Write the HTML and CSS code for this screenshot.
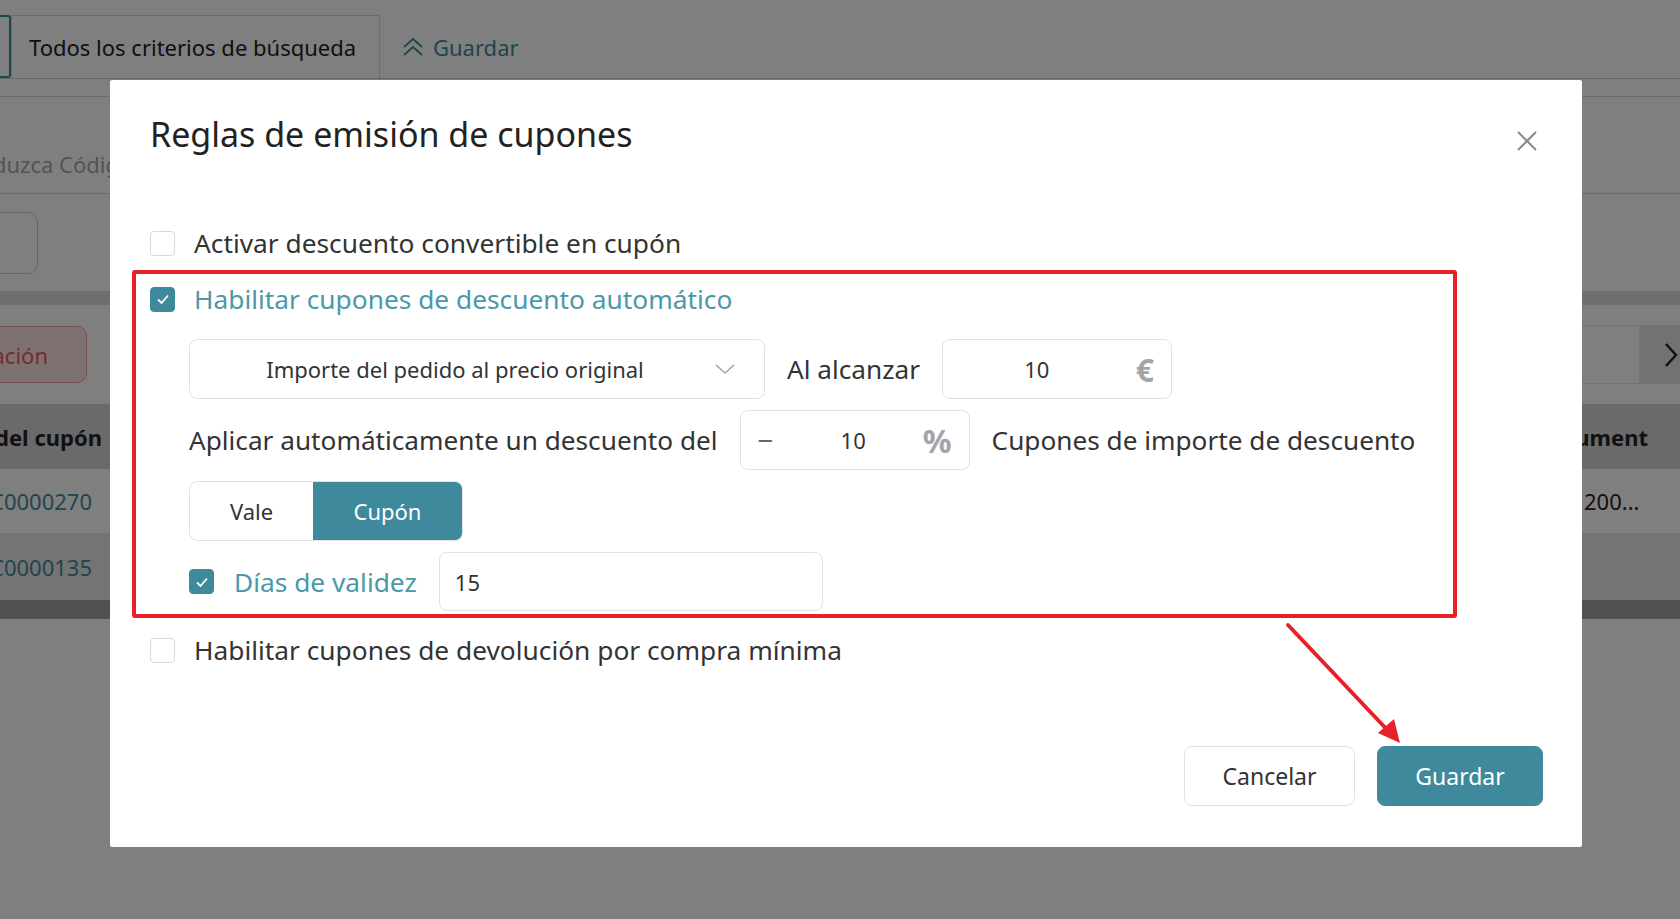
FILE: index.html
```html
<!DOCTYPE html>
<html lang="es">
  <head>
    <meta charset="utf-8">
    <title>Cupones</title>
    <link rel="stylesheet" href="styles.css">
  </head>
  <body>
    <div class="page">
      <div class="tabbar">
        <div class="tab tab-active"></div>
        <div class="tab">Todos los criterios de búsqueda</div>
        <div class="tab-link">
          <svg width="24" height="22" viewBox="0 0 24 22"><path d="M3 11 L12 3 L21 11 M3 19 L12 11 L21 19" fill="none" stroke="#3e8a9c" stroke-width="1.8"/></svg>
          Guardar
        </div>
      </div>
      <div class="filters">
        <div class="field">Introduzca Código del cupón</div>
      </div>
      <div class="btn-row"><div class="ghost-btn"></div></div>
      <div class="band"></div>
      <div class="actions">
        <div class="danger-btn">Eliminación</div>
        <div class="pager">
          <div class="pager-input"></div>
          <div class="pager-next">
            <svg width="14" height="26" viewBox="0 0 14 26"><path d="M2 2 L12 13 L2 24" fill="none" stroke="#222" stroke-width="2.4"/></svg>
          </div>
        </div>
      </div>
      <div class="grid">
        <div class="grid-row grid-head"><span class="cell-left">Código del cupón</span><span class="cell-right">Document</span></div>
        <div class="grid-row"><span class="cell-left code">C0000270</span><span class="cell-right value">200...</span></div>
        <div class="grid-row grid-alt"><span class="cell-left code">C0000135</span><span class="cell-right value"></span></div>
        <div class="scrollbar"></div>
      </div>
    </div>

    <div class="mask">
      <div class="modal">
        <div class="modal-head">
          <h2>Reglas de emisión de cupones</h2>
          <span class="close">
            <svg width="22" height="22" viewBox="0 0 22 22"><path d="M2 2 L20 20 M20 2 L2 20" stroke="#8a8a8a" stroke-width="2"/></svg>
          </span>
        </div>

        <label class="check-row top">
          <span class="box"></span>
          Activar descuento convertible en cupón
        </label>

        <div class="marked">
          <label class="check-row on">
            <span class="box checked"><svg width="16" height="16" viewBox="0 0 16 16"><path d="M3 8.5 L6.5 12 L13 4.5" fill="none" stroke="#fff" stroke-width="1.8"/></svg></span>
            Habilitar cupones de descuento automático
          </label>

          <div class="rule first">
            <div class="select">
              <span class="select-text">Importe del pedido al precio original</span>
              <svg width="22" height="14" viewBox="0 0 22 14"><path d="M2 3 L11 11 L20 3" fill="none" stroke="#a4a4ac" stroke-width="1.6"/></svg>
            </div>
            <span class="text">Al alcanzar</span>
            <div class="num num-euro">
              <span class="num-value">10</span>
              <span class="suffix">€</span>
            </div>
          </div>

          <div class="rule">
            <span class="text">Aplicar automáticamente un descuento del</span>
            <div class="num num-pct">
              <span class="prefix">−</span>
              <span class="num-value">10</span>
              <span class="suffix">%</span>
            </div>
            <span class="text">Cupones de importe de descuento</span>
          </div>

          <div class="rule">
            <div class="segment">
              <span class="seg">Vale</span>
              <span class="seg seg-on">Cupón</span>
            </div>
          </div>

          <div class="rule">
            <label class="check-row on small">
              <span class="box checked"><svg width="16" height="16" viewBox="0 0 16 16"><path d="M3 8.5 L6.5 12 L13 4.5" fill="none" stroke="#fff" stroke-width="1.8"/></svg></span>
              Días de validez
            </label>
            <div class="days">15</div>
          </div>
        </div>

        <label class="check-row last">
          <span class="box"></span>
          Habilitar cupones de devolución por compra mínima
        </label>

        <div class="footer">
          <button class="btn">Cancelar</button>
          <button class="btn btn-primary">Guardar</button>
        </div>

        <svg class="pointer" width="130" height="140" viewBox="0 0 130 140">
          <path d="M6 6 L112 118" stroke="#e8202a" stroke-width="4" stroke-linecap="round"/>
          <path d="M96 114 L118 124 L112 100 Z" fill="#e8202a"/>
        </svg>
      </div>
    </div>
  </body>
</html>
```

FILE: styles.css
```css
body{
  margin: 0;
  background-color: #fff;
  font-family: "Noto Sans", "Open Sans", sans-serif;
  color: #333;
  overflow: hidden;
}

/* pagina de fondo */
.page{
  margin-left: -64px;
  width: 1744px;
  font-size: 22px;
}
.tabbar{
  display: flex;
  align-items: stretch;
  margin-top: 15px;
  height: 63px;
  border-bottom: 1px solid #d0d0d0;
}
.tab{
  display: flex;
  align-items: center;
  padding: 0 17px;
  width: 369px;
  box-sizing: border-box;
  border: 1px solid #d8d8d8;
  border-bottom: none;
  background: #fff;
  color: #222;
}
.tab-active{
  width: 75px;
  padding: 0;
  border: 2px solid #3e8a9c;
  border-radius: 0 3px 3px 0;
}
.tab-link{
  display: flex;
  align-items: center;
  gap: 8px;
  padding-left: 21px;
  color: #3e8a9c;
}
.filters{
  margin-top: 17px;
  border-top: 1px solid #d8d8d8;
  border-bottom: 1px solid #d8d8d8;
  height: 96px;
  display: flex;
  align-items: flex-end;
}
.field{
  padding: 0 0 14px 6px;
  color: #a8a8a8;
}
.btn-row{
  height: 97px;
  display: flex;
  align-items: center;
}
.ghost-btn{
  width: 100px;
  height: 60px;
  border: 1px solid #d0d0d0;
  border-radius: 10px;
}
.band{
  height: 14px;
  background: #dedede;
}
.actions{
  display: flex;
  justify-content: space-between;
  align-items: center;
  height: 59px;
  margin-top: 20px;
}
.danger-btn{
  height: 57px;
  width: 151px;
  display: flex;
  align-items: center;
  justify-content: flex-end;
  padding-right: 38px;
  box-sizing: border-box;
  border: 1px solid #f0a0a0;
  border-radius: 10px;
  background: #fbe3e3;
  color: #e45a5a;
}
.pager{
  display: flex;
  height: 59px;
}
.pager-input{
  width: 120px;
  box-sizing: border-box;
  background: #fff;
  border: 1px solid #e6e6e6;
}
.pager-next{
  width: 40px;
  box-sizing: border-box;
  display: flex;
  align-items: center;
  padding-left: 24px;
  background: #e4e4e4;
}
.grid{
  margin-top: 20px;
}
.grid-row{
  display: flex;
  justify-content: space-between;
  align-items: center;
  height: 64px;
}
.cell-left{
  width: 166px;
  text-align: right;
  white-space: nowrap;
  overflow: hidden;
  direction: rtl;
}
.code{
  width: 156px;
  color: #3e8a9c;
}
.cell-right{
  width: 152px;
  box-sizing: border-box;
  padding-right: 32px;
  white-space: nowrap;
}
.grid-head .cell-right{
  text-align: right;
}
.value{
  padding-left: 56px;
  color: #222;
}
.grid-head{
  height: 65px;
  background: #d4d4d4;
  font-weight: bold;
  color: #222;
}
.grid-alt{
  height: 67px;
  background: #e8e8e8;
}
.scrollbar{
  height: 19px;
  background: #a0a0a0;
}

/* dialogo */
.mask{
  position: fixed;
  inset: 0;
  background: rgba(0, 0, 0, 0.5);
  padding: 80px 0 0 110px;
}
.modal{
  position: relative;
  width: 1472px;
  box-sizing: border-box;
  padding: 34px 39px 41px 40px;
  background: #fff;
  border-radius: 2px;
}
.modal-head{
  display: flex;
  justify-content: space-between;
  align-items: center;
  height: 40px;
}
.modal-head h2{
  margin: 0;
  font-size: 34px;
  font-weight: normal;
  color: #222;
}
.close{
  margin-right: 5px;
  margin-top: 18px;
}
.check-row{
  display: flex;
  align-items: center;
  gap: 19px;
  height: 36px;
  font-size: 26.3px;
  color: #333;
}
.check-row.top{
  margin-top: 71px;
}
.box{
  width: 25px;
  height: 25px;
  box-sizing: border-box;
  border: 1.5px solid #d9d9de;
  border-radius: 4px;
  display: flex;
  align-items: center;
  justify-content: center;
}
.checked{
  background: #3e8a9c;
  border-color: #3e8a9c;
}
.on{
  color: #4a98aa;
}
.marked{
  margin: 9px 86px 0 -18px;
  padding: 7px 14px 3px 14px;
  border: 4px solid #e8202a;
  border-radius: 3px;
}
.rule{
  display: flex;
  align-items: center;
  gap: 22px;
  margin-top: 11px;
  padding-left: 39px;
  font-size: 26.2px;
}
.rule.first{
  margin-top: 22px;
}
.select{
  width: 576px;
  height: 60px;
  box-sizing: border-box;
  border: 1.5px solid #e0e1e6;
  border-radius: 8px;
  display: flex;
  align-items: center;
  padding: 0 28px 0 18px;
  font-size: 22px;
}
.select-text{
  flex: 1;
  margin-right: 12px;
  text-align: center;
}
.text{
  color: #333;
}
.num{
  width: 230px;
  height: 60px;
  box-sizing: border-box;
  border: 1.5px solid #e0e1e6;
  border-radius: 8px;
  display: flex;
  align-items: center;
  padding: 0 17px;
  font-size: 22px;
}
.num-value{
  flex: 1;
  text-align: center;
}
.num-euro .num-value{
  margin-right: 22px;
}
.num-pct .num-value{
  margin-left: 10px;
}
.suffix{
  font-size: 32px;
  font-weight: bold;
  color: #a4a4ac;
}
.prefix{
  font-size: 28px;
  color: #666;
}
.segment{
  display: flex;
  height: 60px;
  box-sizing: border-box;
  border: 1.5px solid #e0e1e6;
  border-radius: 8px;
  overflow: hidden;
  font-size: 22px;
}
.seg{
  width: 123px;
  display: flex;
  align-items: center;
  justify-content: center;
}
.seg-on{
  width: 149px;
  background: #3e8a9c;
  color: #fff;
}
.check-row.small{
  gap: 20px;
}
.days{
  width: 384px;
  height: 59px;
  box-sizing: border-box;
  border: 1.5px solid #e0e1e6;
  border-radius: 8px;
  display: flex;
  align-items: center;
  padding-left: 15px;
  font-size: 22px;
}
.check-row.last{
  margin-top: 14px;
}
.footer{
  display: flex;
  justify-content: flex-end;
  gap: 22px;
  margin-top: 78px;
}
.btn{
  width: 171px;
  height: 60px;
  border: 1.5px solid #e0e1e6;
  border-radius: 8px;
  background: #fff;
  font-family: inherit;
  font-size: 23px;
  color: #333;
}
.btn-primary{
  width: 166px;
  border-color: #3e8a9c;
  background: #3e8a9c;
  color: #fff;
}
.pointer{
  position: absolute;
  left: 1172px;
  top: 539px;
}
```
